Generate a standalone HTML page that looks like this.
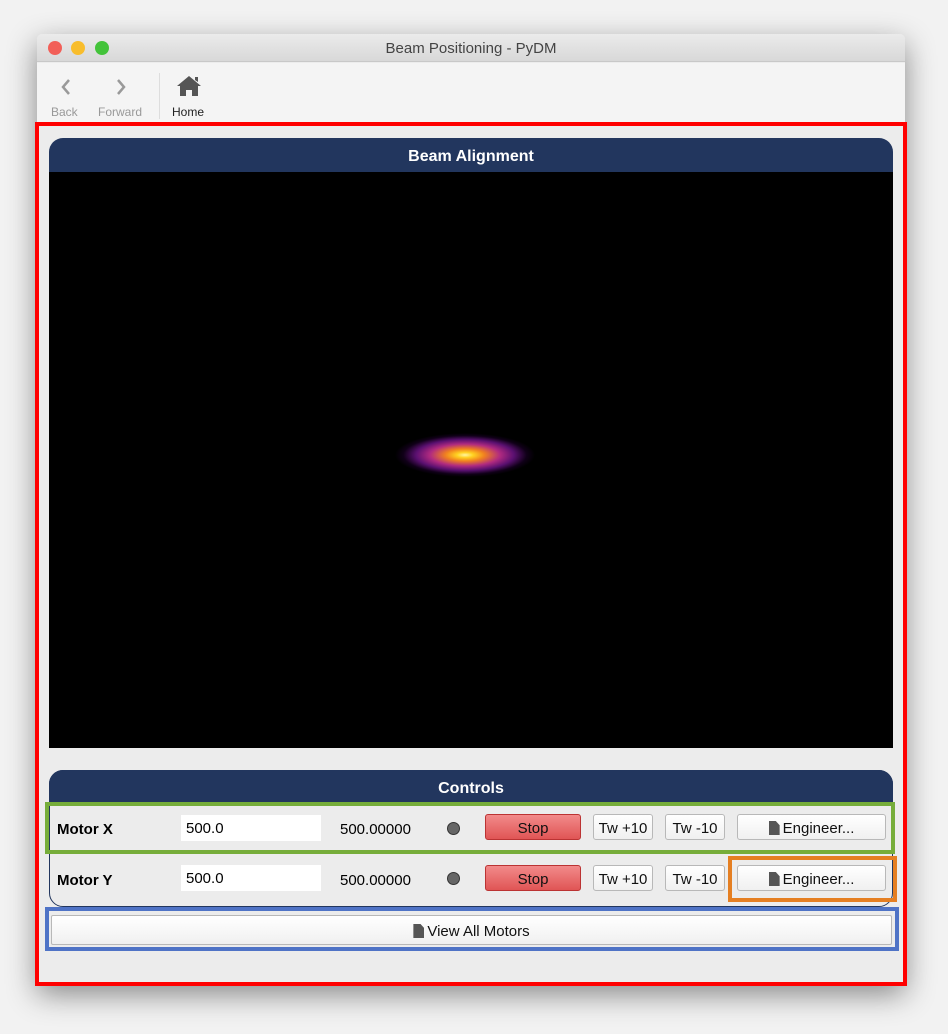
<!DOCTYPE html><html><head><style>
body{margin:0;width:948px;height:1034px;background:#f2f2f2;font-family:"Liberation Sans",sans-serif;position:relative;overflow:hidden}
.a{position:absolute;box-sizing:border-box}
.win{left:37px;top:34px;width:868px;height:950px;background:#ececec;box-shadow:0 10px 30px rgba(0,0,0,.45);border-radius:5px 5px 0 0}
.btn,.stop{display:flex;align-items:center;justify-content:center;font-size:15px;color:#111;height:26px;border-radius:3px;padding-top:2px}
.btn{background:linear-gradient(#fff,#f0f0f0);border:1px solid #b8b8b8}
.stop{background:linear-gradient(#f28a8a,#e05555);border:1px solid #b33}
.inp{background:#fff;height:26px;font-size:15px;line-height:28px;padding-left:5px}
.lbl{font-weight:bold;font-size:15px}
.val{font-size:15px}
.led{width:13px;height:13px;border-radius:50%;background:#666;border:1px solid #333}
.doc{display:inline-block;width:11px;height:14px;background:#555;margin-right:3px;clip-path:polygon(0 0,65% 0,100% 30%,100% 100%,0 100%)}
.hd{color:#fff;font-size:16px;font-weight:bold;text-align:center;background:#22365e}
</style></head><body>
<div class="a win"></div>
<div class="a" style="left:37px;top:34px;width:868px;height:28px;background:linear-gradient(#ebebeb,#d8d8d8);border-radius:5px 5px 0 0;border-bottom:1px solid #c8c8c8"></div>
<div class="a" style="left:48px;top:41px;width:14px;height:14px;border-radius:50%;background:#f25f58"></div>
<div class="a" style="left:71px;top:41px;width:14px;height:14px;border-radius:50%;background:#f8bd2c"></div>
<div class="a" style="left:95px;top:41px;width:14px;height:14px;border-radius:50%;background:#43c33a"></div>
<div class="a" style="left:37px;top:40px;width:868px;text-align:center;font-size:15px;color:#444">Beam Positioning - PyDM</div>
<div class="a" style="left:37px;top:63px;width:868px;height:59px;background:#f4f4f4"></div>
<svg class="a" style="left:58px;top:78px" width="16" height="18"><path d="M11 2 L5 9 L11 16" stroke="#999" stroke-width="2.5" fill="none"/></svg>
<svg class="a" style="left:113px;top:78px" width="16" height="18"><path d="M5 2 L11 9 L5 16" stroke="#999" stroke-width="2.5" fill="none"/></svg>
<div class="a" style="left:51px;top:105px;font-size:12px;color:#999">Back</div>
<div class="a" style="left:98px;top:105px;font-size:12px;color:#999">Forward</div>
<div class="a" style="left:159px;top:73px;width:1px;height:46px;background:#ddd"></div>
<svg class="a" style="left:176px;top:75px" width="26" height="22"><path d="M13 1 L1 11 H4 V21 H10 V15 H16 V21 H22 V11 H25 Z M19 2 H22 V7 L19 5Z" fill="#555"/></svg>
<div class="a" style="left:172px;top:105px;font-size:12px;color:#222">Home</div>
<div class="a hd" style="left:49px;top:138px;width:844px;height:35px;border-radius:14px 14px 0 0;line-height:37px">Beam Alignment</div>
<div class="a" style="left:49px;top:172px;width:844px;height:576px;background:#000"></div>
<div class="a" style="left:395px;top:433px;width:140px;height:44px;border-radius:50%;background:radial-gradient(ellipse closest-side,#fff6a0 0%,#ffd020 12%,#f08020 28%,#b02a80 50%,#5a1070 70%,rgba(40,0,60,.4) 88%,rgba(0,0,0,0) 100%)"></div>
<div class="a" style="left:49px;top:770px;width:844px;height:137px;border:1px solid #22365e;border-radius:14px;"></div>
<div class="a hd" style="left:49px;top:770px;width:844px;height:33px;border-radius:14px 14px 0 0;line-height:37px">Controls</div>
<div class="a lbl" style="left:57px;top:821px">Motor X</div>
<div class="a inp" style="left:181px;top:815px;width:140px">500.0</div>
<div class="a val" style="left:340px;top:821px">500.00000</div>
<div class="a led" style="left:447px;top:822px"></div>
<div class="a stop" style="left:485px;top:814px;width:96px">Stop</div>
<div class="a btn" style="left:593px;top:814px;width:60px">Tw +10</div>
<div class="a btn" style="left:665px;top:814px;width:60px">Tw -10</div>
<div class="a btn" style="left:737px;top:814px;width:149px"><span class="doc"></span>Engineer...</div>
<div class="a lbl" style="left:57px;top:872px">Motor Y</div>
<div class="a inp" style="left:181px;top:865px;width:140px">500.0</div>
<div class="a val" style="left:340px;top:872px">500.00000</div>
<div class="a led" style="left:447px;top:872px"></div>
<div class="a stop" style="left:485px;top:865px;width:96px">Stop</div>
<div class="a btn" style="left:593px;top:865px;width:60px">Tw +10</div>
<div class="a btn" style="left:665px;top:865px;width:60px">Tw -10</div>
<div class="a btn" style="left:737px;top:865px;width:149px"><span class="doc"></span>Engineer...</div>
<div class="a btn" style="left:51px;top:915px;width:841px;height:30px;border-radius:2px"><span class="doc"></span>View All Motors</div>
<div class="a" style="left:45px;top:802px;width:850px;height:52px;border:4px solid #76ad3a"></div>
<div class="a" style="left:728px;top:856px;width:169px;height:46px;border:4px solid #e57f22"></div>
<div class="a" style="left:45px;top:907px;width:854px;height:44px;border:4px solid #4f73c6"></div>
<div class="a" style="left:35px;top:122px;width:872px;height:864px;border:4px solid #f00"></div>
</body></html>
